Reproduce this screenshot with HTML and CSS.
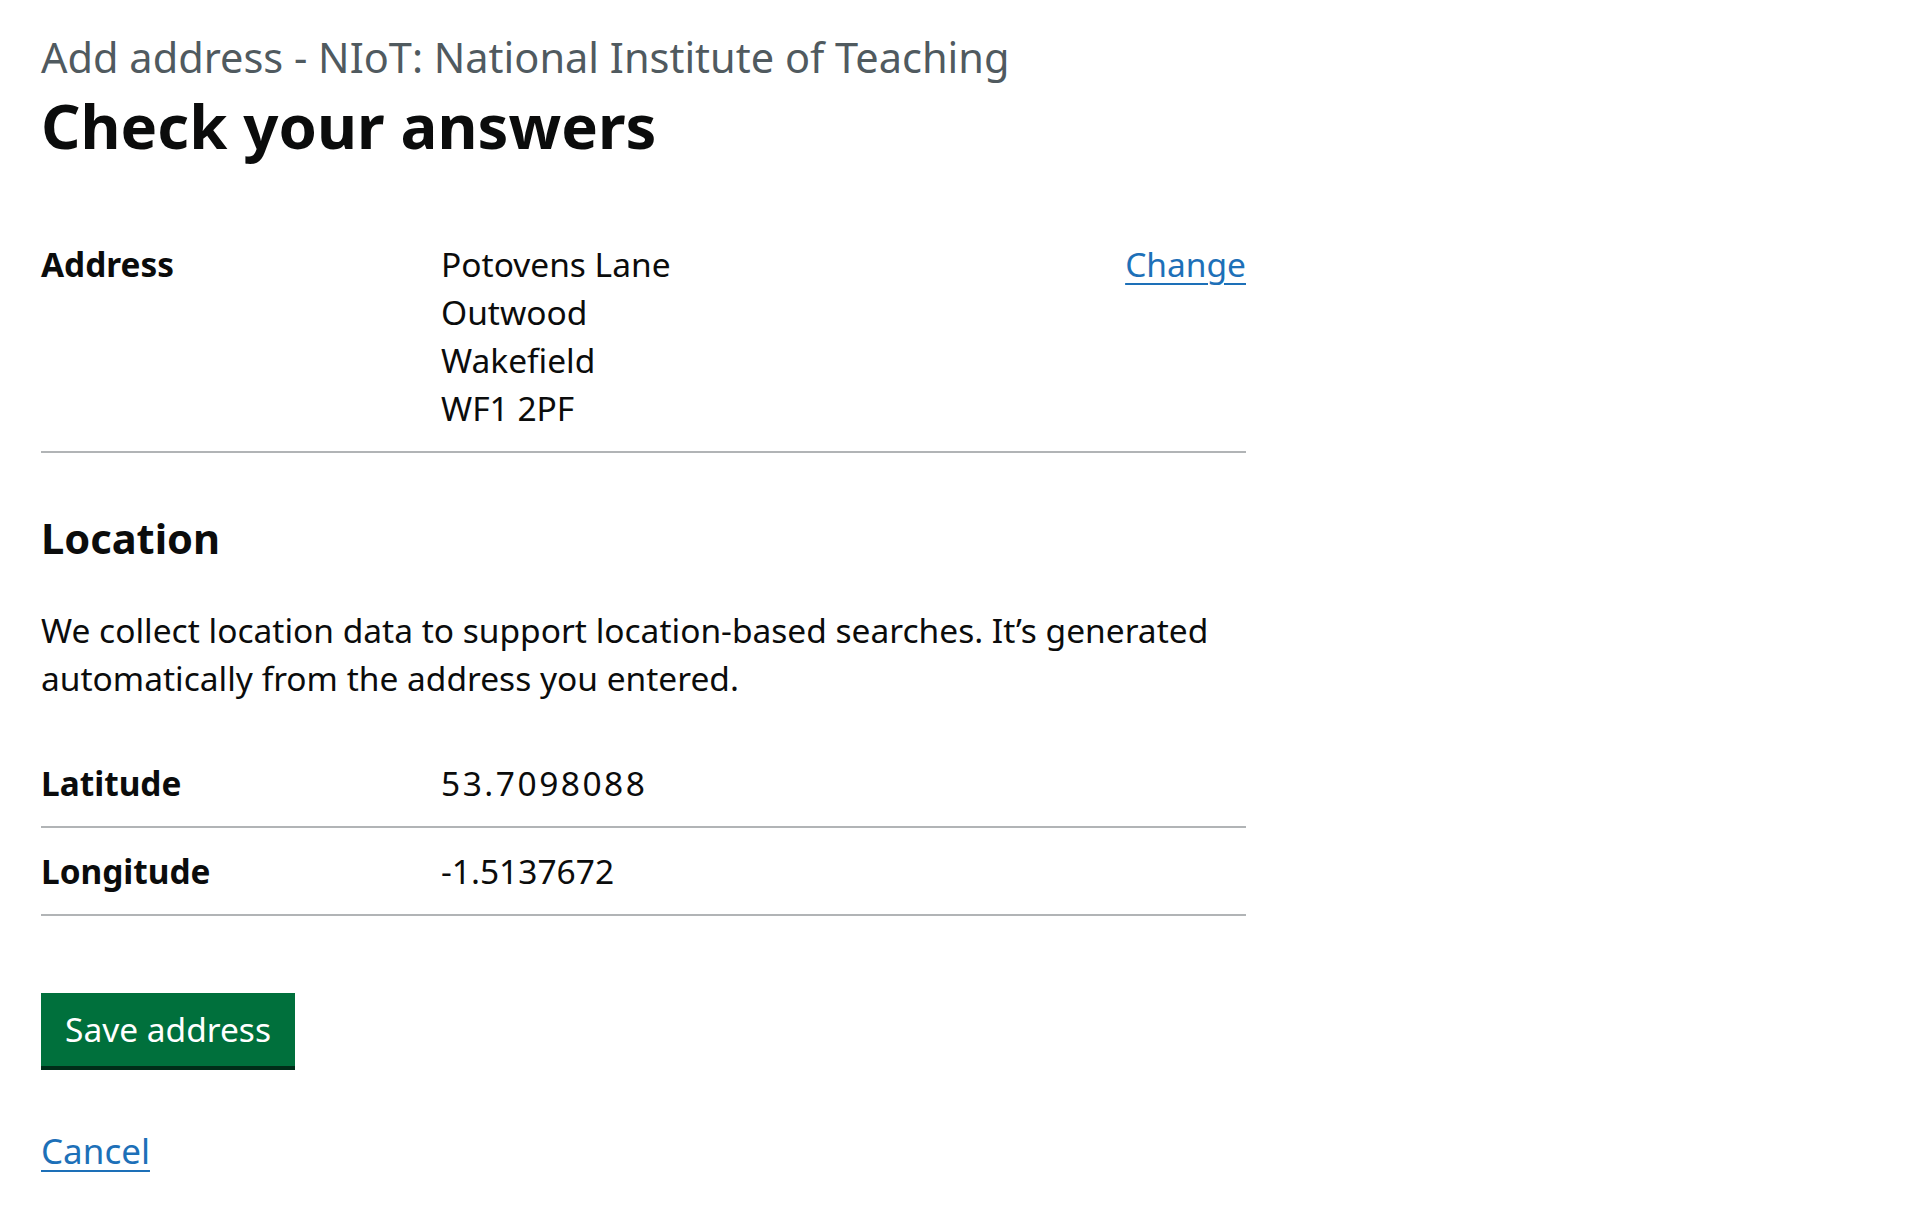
FILE: index.html
```html
<!DOCTYPE html>
<html lang="en">
<head>
<meta charset="utf-8">
<title>Check your answers</title>
<link rel="stylesheet" href="styles.css">
</head>
<body>
<main class="page">
  <span class="caption">Add address - NIoT: National Institute of Teaching</span>
  <h1 class="title">Check your answers</h1>

  <dl class="summary summary--address">
    <div class="summary__row">
      <dt class="summary__key">Address</dt>
      <dd class="summary__value">Potovens Lane<br>Outwood<br>Wakefield<br>WF1 2PF</dd>
      <dd class="summary__actions"><a class="link" href="#">Change</a></dd>
    </div>
  </dl>

  <h2 class="section-title">Location</h2>
  <p class="body-text">We collect location data to support location-based searches. It’s generated automatically from the address you entered.</p>

  <dl class="summary summary--location">
    <div class="summary__row">
      <dt class="summary__key">Latitude</dt>
      <dd class="summary__value summary__value--wide">53.7098088</dd>
    </div>
    <div class="summary__row">
      <dt class="summary__key">Longitude</dt>
      <dd class="summary__value">-1.5137672</dd>
    </div>
  </dl>

  <button class="button" type="button">Save address</button>
  <p class="cancel"><a class="link link--cancel" href="#">Cancel</a></p>
</main>
</body>
</html>
```
FILE: styles.css
```css
* { box-sizing: border-box; }

html, body {
  margin: 0;
  padding: 0;
  background: #ffffff;
}

body {
  font-family: "Noto Sans", "Liberation Sans", Arial, sans-serif;
  color: #0b0c0c;
  font-size: 33.5px;
  line-height: 48px;
}

.page {
  width: 1205px;
  margin-left: 41px;
  padding-top: 33px;
  display: flex;
  flex-direction: column;
  align-items: flex-start;
}

.caption {
  display: block;
  font-size: 41.5px;
  line-height: 48px;
  color: #505a5f;
  font-weight: 400;
}

.title {
  margin: 12px 0 0;
  font-size: 61.6px;
  line-height: 64px;
  font-weight: 700;
}

.summary {
  width: 100%;
  margin: 0;
}

.summary--address {
  margin-top: 64px;
}

.summary__row {
  display: grid;
  grid-template-columns: 400px 1fr auto;
  border-bottom: 2px solid #b1b4b6;
}

.summary__key,
.summary__value,
.summary__actions {
  margin: 0;
  padding: 19px 0;
}

.summary__key {
  font-weight: 700;
  font-size: 33.4px;
}

.summary__value--wide {
  letter-spacing: 2.5px;
}

.summary__actions {
  text-align: right;
}

.link {
  color: #1d70b8;
  text-decoration: underline;
  text-decoration-thickness: 2px;
  text-underline-offset: 6px;
}

.link--cancel {
  font-size: 35px;
}

.section-title {
  margin: 61px 0 0;
  font-size: 41.6px;
  line-height: 48px;
  font-weight: 700;
}

.body-text {
  margin: 44px 0 0;
  width: 100%;
}

.summary--location {
  margin-top: 38px;
}

.button {
  margin-top: 77px;
  font-family: inherit;
  font-size: 33.5px;
  line-height: 48px;
  color: #ffffff;
  background: #00703c;
  border: 0;
  border-radius: 0;
  padding: 12px 24px 13px;
  box-shadow: 0 4px 0 #002d18;
  cursor: pointer;
}

.cancel {
  margin: 61px 0 0;
}
```
